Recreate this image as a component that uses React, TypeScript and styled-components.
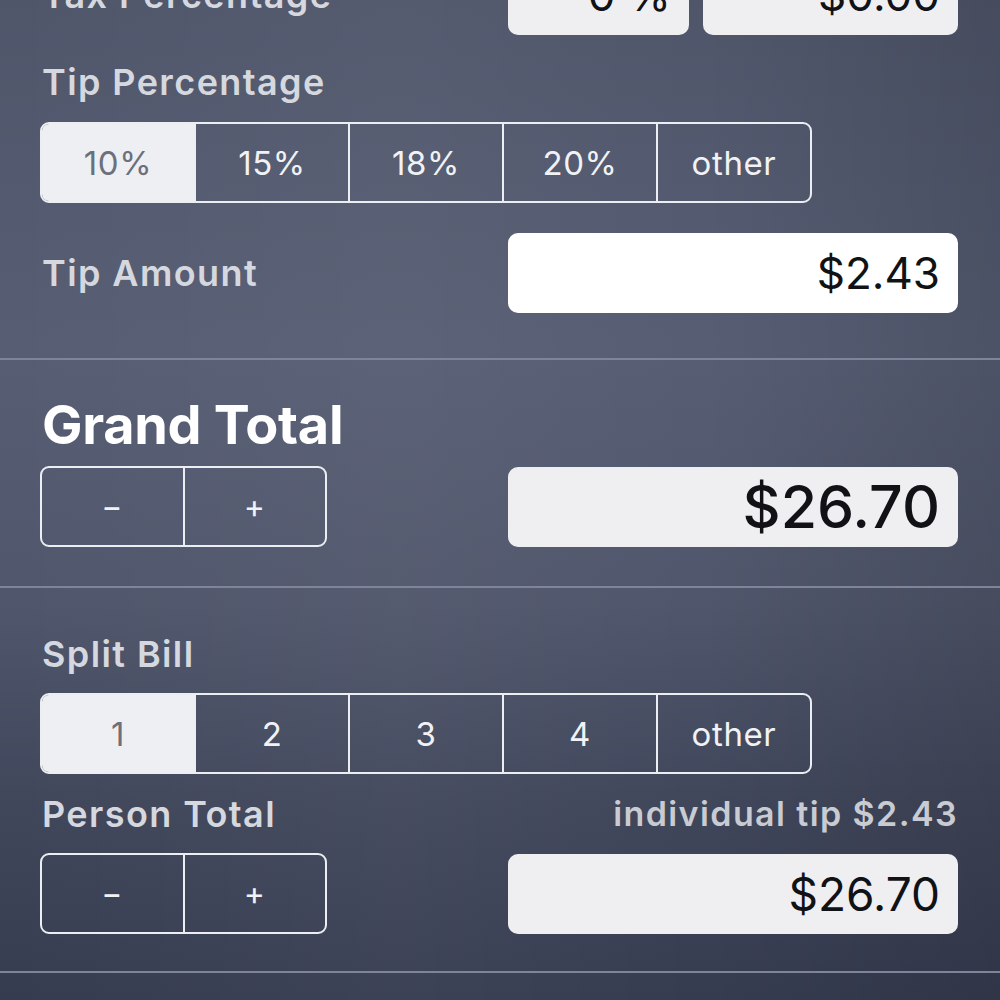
import React, { useState } from 'react'
import styled, { createGlobalStyle } from 'styled-components'

const GlobalStyle = createGlobalStyle`
  html, body {
    margin: 0;
    padding: 0;
    height: 1000px;
    overflow: hidden;
  }
  body {
    font-family: Inter, 'Noto Sans', 'Liberation Sans', sans-serif;
    background-color: #4d5468;
    background-image:
      linear-gradient(90deg, rgba(255, 255, 255, 0) 0%, rgba(255, 255, 255, 0.03) 40%, rgba(0, 0, 0, 0) 70%, rgba(0, 0, 0, 0.12) 100%),
      linear-gradient(180deg, #4f566a 0%, #575e74 35%, #50566b 60%, #41475b 80%, #363c50 100%);
  }
`

const Page = styled.div`
  display: flex;
  flex-direction: column;
  margin-top: -45px;
`

const Section = styled.div<{ $pt?: number; $pb?: number }>`
  display: flex;
  flex-direction: column;
  padding: ${p => p.$pt ?? 0}px 42px ${p => p.$pb ?? 0}px 40px;
`

const Divider = styled.div`
  height: 2px;
  background: #7e8499;
`

const Row = styled.div<{ $mt?: number }>`
  display: flex;
  align-items: center;
  justify-content: space-between;
  margin-top: ${p => p.$mt ?? 0}px;
`

const Label = styled.div<{ $mt?: number }>`
  font-size: 36px;
  font-weight: 600;
  letter-spacing: 1.4px;
  color: #d6d8df;
  padding-left: 2px;
  line-height: 44px;
  margin-top: ${p => p.$mt ?? 0}px;
`

const Heading = styled.div`
  font-size: 54px;
  font-weight: 700;
  color: #ffffff;
  letter-spacing: -0.3px;
  padding-left: 2px;
  line-height: 60px;
`

const Hint = styled.div`
  font-size: 34px;
  font-weight: 600;
  letter-spacing: 1.4px;
  color: #c9cbd3;
  line-height: 44px;
`

const BoxGroup = styled.div`
  display: flex;
  gap: 14px;
`

const ValueBox = styled.div<{ $w: number; $bg: string; $size: number; $weight?: number }>`
  width: ${p => p.$w}px;
  height: 80px;
  box-sizing: border-box;
  border-radius: 10px;
  background: ${p => p.$bg};
  display: flex;
  align-items: center;
  justify-content: flex-end;
  padding-right: 18px;
  font-size: ${p => p.$size}px;
  font-weight: ${p => p.$weight ?? 400};
  color: #111216;
`

const Segmented = styled.div<{ $w: number; $mt?: number }>`
  display: flex;
  width: ${p => p.$w}px;
  height: 81px;
  box-sizing: border-box;
  border: 2px solid #eceef2;
  border-radius: 9px;
  overflow: hidden;
  margin-top: ${p => p.$mt ?? 0}px;
`

const Segment = styled.div<{ $active?: boolean; $size: number }>`
  flex: 1;
  display: flex;
  align-items: center;
  justify-content: center;
  font-size: ${p => p.$size}px;
  letter-spacing: 0.6px;
  color: ${p => (p.$active ? '#6c6f7c' : '#f1f2f5')};
  background: ${p => (p.$active ? '#eeeff2' : 'transparent')};
  cursor: pointer;
  & + & {
    border-left: 2px solid #eceef2;
  }
`

function SegmentGroup({ items, initial, width, mt }: { items: string[]; initial: number; width: number; mt?: number }) {
  const [active, setActive] = useState(initial)
  return (
    <Segmented $w={width} $mt={mt}>
      {items.map((it, i) => (
        <Segment key={it} $size={33} $active={i === active} onClick={() => setActive(i)}>
          {it}
        </Segment>
      ))}
    </Segmented>
  )
}

function Stepper({ mt }: { mt?: number }) {
  return (
    <Segmented $w={287} $mt={mt}>
      <Segment $size={32}>−</Segment>
      <Segment $size={32}>+</Segment>
    </Segmented>
  )
}

export default function App() {
  return (
    <>
      <GlobalStyle />
      <Page>
        <Section $pb={45}>
          <Row>
            <Label>Tax Percentage</Label>
            <BoxGroup>
              <ValueBox $w={181} $bg="#efeff2" $size={44}>0 %</ValueBox>
              <ValueBox $w={255} $bg="#efeff2" $size={44}>$0.00</ValueBox>
            </BoxGroup>
          </Row>
          <Label $mt={25}>Tip Percentage</Label>
          <SegmentGroup items={['10%', '15%', '18%', '20%', 'other']} initial={0} width={772} mt={18} />
          <Row $mt={30}>
            <Label>Tip Amount</Label>
            <ValueBox $w={450} $bg="#ffffff" $size={44}>$2.43</ValueBox>
          </Row>
        </Section>
        <Divider />
        <Section $pt={35} $pb={39}>
          <Heading>Grand Total</Heading>
          <Row $mt={11}>
            <Stepper />
            <ValueBox $w={450} $bg="#efeff2" $size={59} $weight={500}>$26.70</ValueBox>
          </Row>
        </Section>
        <Divider />
        <Section $pt={44} $pb={37}>
          <Label>Split Bill</Label>
          <SegmentGroup items={['1', '2', '3', '4', 'other']} initial={0} width={772} mt={17} />
          <Row $mt={18}>
            <Label>Person Total</Label>
            <Hint>individual tip $2.43</Hint>
          </Row>
          <Row $mt={17}>
            <Stepper />
            <ValueBox $w={450} $bg="#efeff2" $size={46}>$26.70</ValueBox>
          </Row>
        </Section>
        <Divider />
      </Page>
    </>
  )
}
